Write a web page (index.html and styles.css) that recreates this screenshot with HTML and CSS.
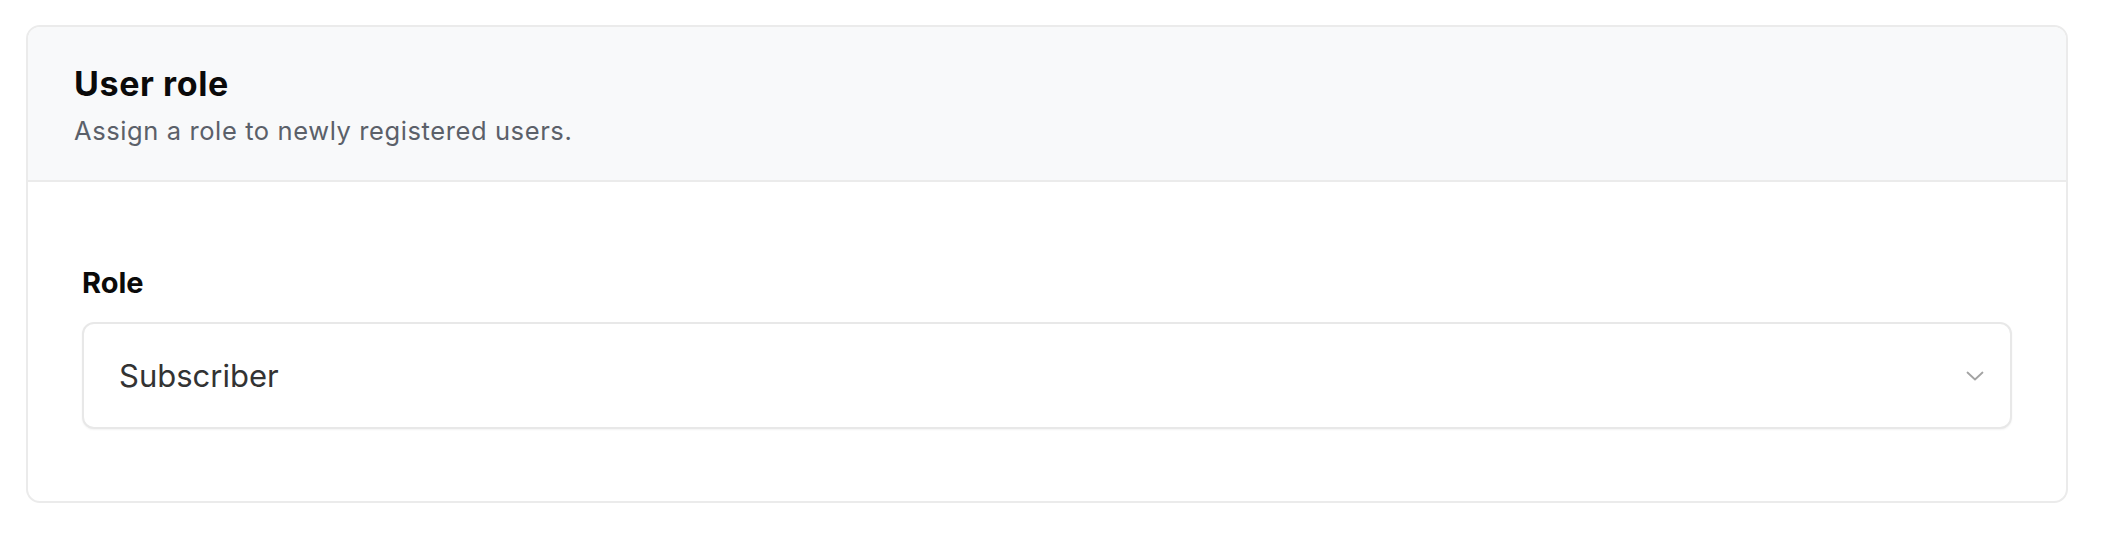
FILE: index.html
```html
<!DOCTYPE html>
<html lang="en">
<head>
  <meta charset="UTF-8">
  <meta name="viewport" content="width=device-width, initial-scale=1.0">
  <title>User role</title>
  <link rel="stylesheet" href="styles.css">
</head>
<body>
  <div class="card">
    <div class="card-header">
      <h2>User role</h2>
      <p>Assign a role to newly registered users.</p>
    </div>
    <div class="card-body">
      <label for="role">Role</label>
      <div class="select-wrap">
        <select id="role" class="role-select">
          <option>Subscriber</option>
          <option>Contributor</option>
          <option>Author</option>
          <option>Editor</option>
          <option>Administrator</option>
        </select>
        <svg class="chevron" width="18" height="10" viewBox="0 0 18 10" fill="none">
          <path d="M1.5 1.5 L9 8.5 L16.5 1.5" stroke="#a3a3a3" stroke-width="1.8" stroke-linecap="round" stroke-linejoin="round"/>
        </svg>
      </div>
    </div>
  </div>
</body>
</html>
```

FILE: styles.css
```css
body {
  font-family: Inter, "Noto Sans", Arial, sans-serif;
  background-color: white;
  margin: 0;
  padding: 25px 34px 25px 26px;
}
.card {
  border: 2px solid #ebebeb;
  border-radius: 14px;
  overflow: hidden;
}
.card-header {
  background-color: #f8f9fa;
  border-bottom: 2px solid #ebebeb;
  padding: 37px 46px 31px;
}
.card-header h2 {
  margin: 0;
  font-size: 34px;
  line-height: 40px;
  font-weight: 650;
  letter-spacing: 0.6px;
  color: #0a0a0a;
}
.card-header p {
  margin: 9px 0 0;
  font-size: 25.5px;
  line-height: 36px;
  letter-spacing: 0.6px;
  color: #5b6069;
}
.card-body {
  padding: 83px 54px 72px;
}
.card-body label {
  display: block;
  font-size: 29px;
  line-height: 36px;
  font-weight: 650;
  color: #0a0a0a;
}
.select-wrap {
  position: relative;
  margin-top: 21px;
}
.role-select {
  -webkit-appearance: none;
  appearance: none;
  width: 100%;
  height: 107px;
  padding: 0 60px 0 35px;
  font-family: inherit;
  font-size: 31px;
  color: #333333;
  background-color: white;
  border: 2px solid #e8e8e8;
  border-radius: 12px;
  box-shadow: 0 1px 2px rgba(0, 0, 0, 0.05);
  outline: none;
}
.chevron {
  position: absolute;
  right: 28px;
  top: 49px;
  pointer-events: none;
}
```
